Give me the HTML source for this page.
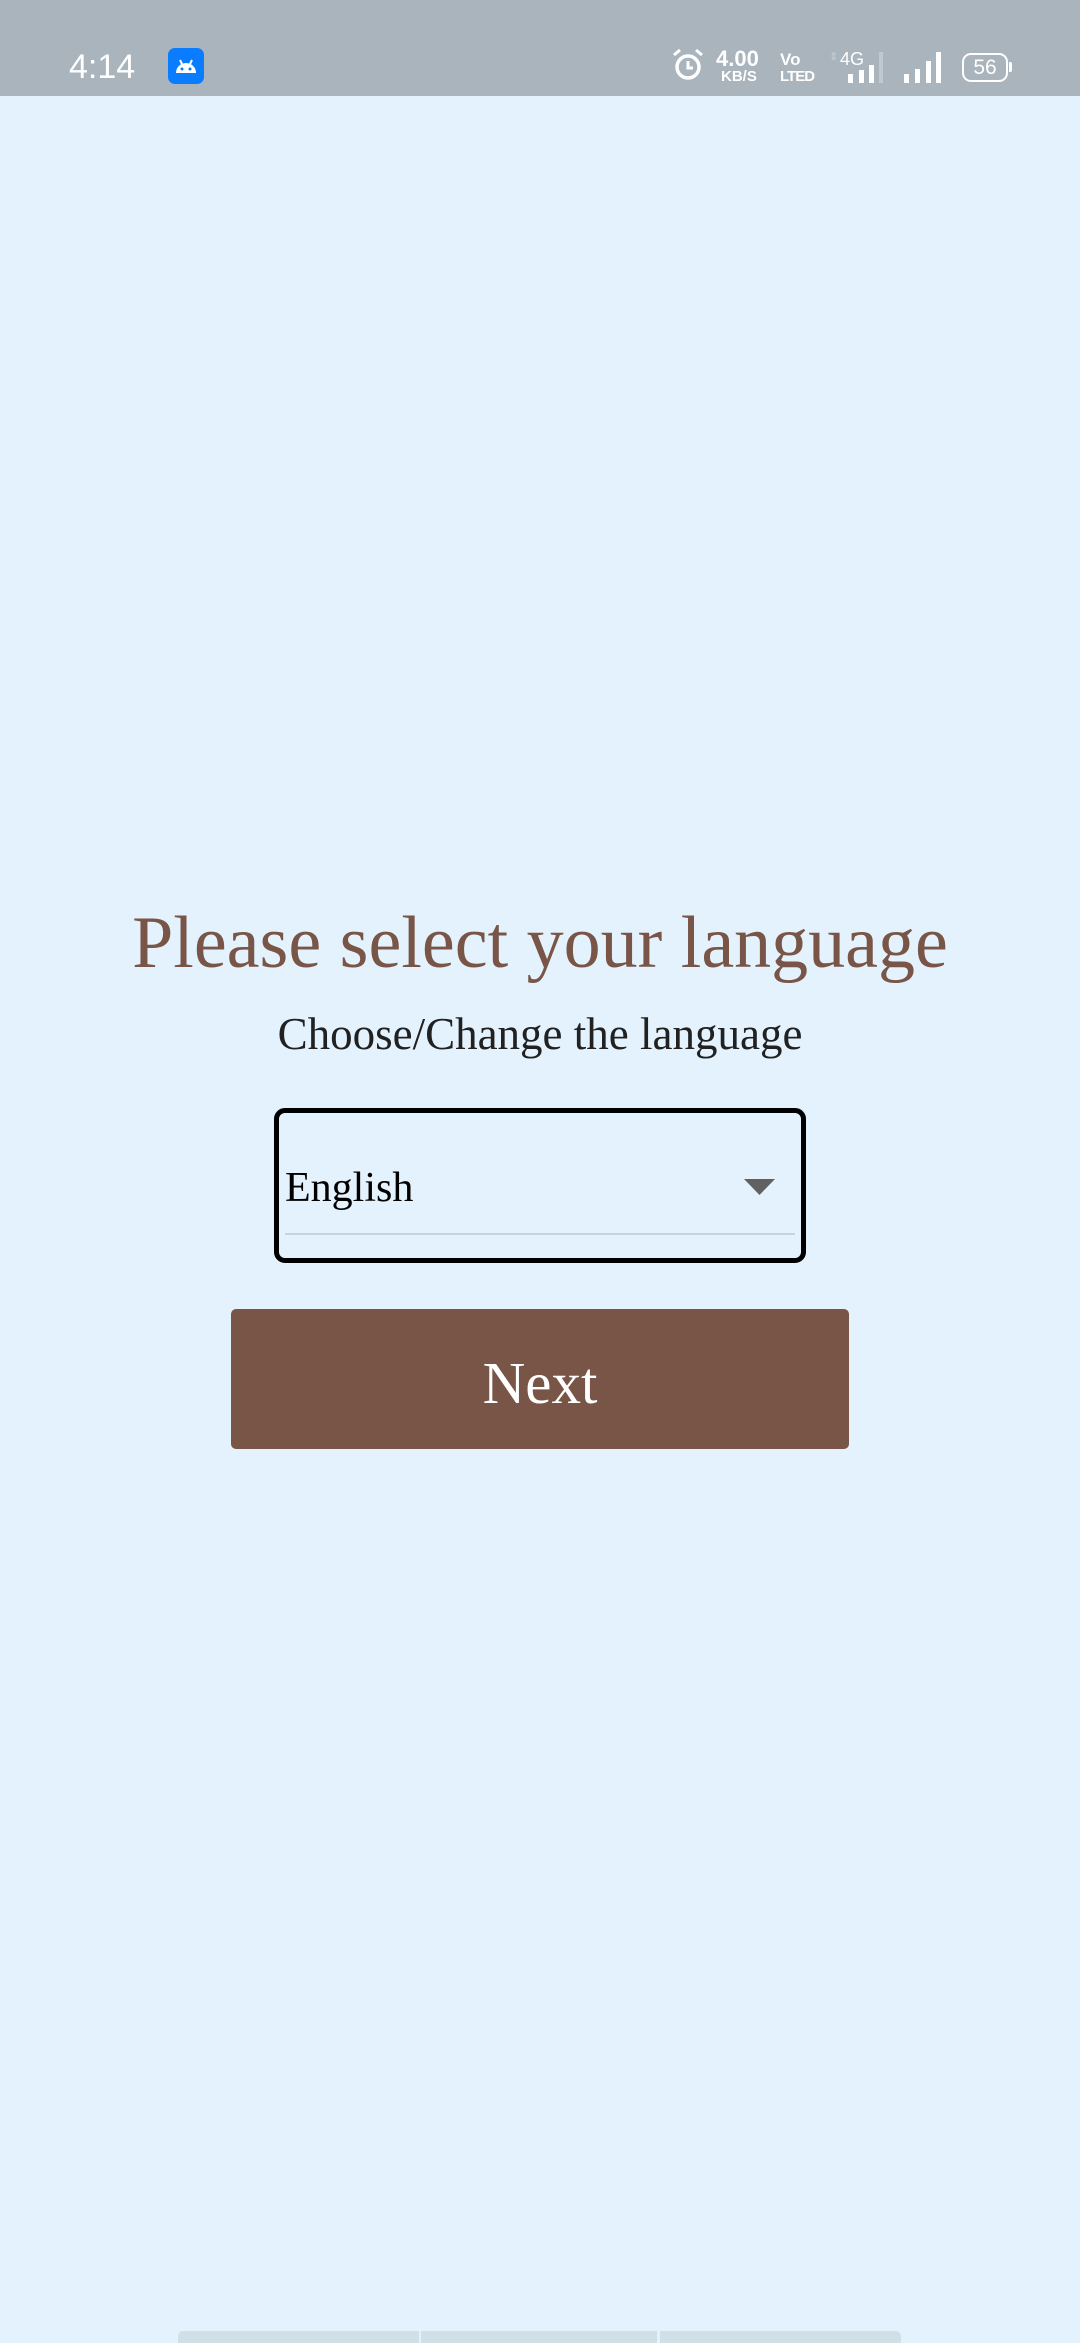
<!DOCTYPE html>
<html><head><meta charset="utf-8"><style>
html,body{margin:0;padding:0;width:1080px;height:2340px;overflow:hidden;background:#e3f2fd;font-family:"Liberation Serif",serif;}
.sb{position:absolute;left:0;top:0;width:1080px;height:96px;background:#a9b4bd;}
.abs{position:absolute;}
.t{white-space:nowrap;line-height:1;}
</style></head><body>
<div class="sb">
  <div class="abs" style="left:69px;top:50px;font:34px 'Liberation Sans',sans-serif;color:#fff;line-height:1;">4:14</div>
  <div class="abs" style="left:168px;top:48px;width:36px;height:36px;background:#0a7cff;border-radius:7px;">
    <svg width="36" height="36" viewBox="0 0 36 36"><path d="M8 25 A10 10 0 0 1 28 25 Z" fill="#fff"/><line x1="12" y1="12" x2="14" y2="16" stroke="#fff" stroke-width="2"/><line x1="24" y1="12" x2="22" y2="16" stroke="#fff" stroke-width="2"/><circle cx="14" cy="21" r="1.5" fill="#0a7cff"/><circle cx="22" cy="21" r="1.5" fill="#0a7cff"/></svg>
  </div>
  <svg class="abs" style="left:670px;top:48px" width="36" height="34" viewBox="0 0 36 34"><circle cx="18" cy="19" r="11" fill="none" stroke="#fff" stroke-width="3.5"/><path d="M18 13v7h5" fill="none" stroke="#fff" stroke-width="3"/><path d="M4 7l6-5M32 7l-6-5" stroke="#fff" stroke-width="3"/></svg>
  <div class="abs" style="left:716px;top:48px;font:bold 22px 'Liberation Sans',sans-serif;color:#fff;line-height:1;">4.00</div>
  <div class="abs" style="left:721px;top:69px;font:bold 15px 'Liberation Sans',sans-serif;color:#fff;line-height:1;">KB/S</div>
  <div class="abs" style="left:780px;top:51px;font:bold 17px 'Liberation Sans',sans-serif;color:#fff;line-height:1;">Vo</div>
  <div class="abs" style="left:780px;top:69px;font:bold 15px 'Liberation Sans',sans-serif;color:#fff;line-height:1;letter-spacing:-1px;">LTED</div>
  <div class="abs" style="left:829px;top:52px;font:11px 'Liberation Sans',sans-serif;color:#c8d0d6;line-height:1;">⇕</div>
  <div class="abs" style="left:840px;top:50px;font:18px 'Liberation Sans',sans-serif;color:#fff;line-height:1;">4G</div>
  <svg class="abs" style="left:845px;top:50px" width="100" height="35" viewBox="0 0 100 35">
    <rect x="3" y="24" width="5" height="9" fill="#fff"/><rect x="14" y="20" width="5" height="13" fill="#fff"/><rect x="24" y="15" width="5" height="18" fill="#fff"/><rect x="34" y="2" width="4" height="31" fill="#c0c9cf"/>
    <rect x="59" y="24" width="5" height="9" fill="#fff"/><rect x="70" y="19" width="5" height="14" fill="#fff"/><rect x="81" y="11" width="5" height="22" fill="#fff"/><rect x="91" y="2" width="5" height="31" fill="#fff"/>
  </svg>
  <div class="abs" style="left:962px;top:53px;width:42px;height:25px;border:2.5px solid #fff;border-radius:9px;font:21px 'Liberation Sans',sans-serif;color:#fff;text-align:center;line-height:25px;">56</div>
  <div class="abs" style="left:1009px;top:62px;width:3px;height:10px;background:#fff;border-radius:0 2px 2px 0;"></div>
</div>

<div class="abs t" style="left:0;width:1080px;text-align:center;top:906px;font-size:74px;color:#795548;">Please select your language</div>
<div class="abs t" style="left:0;width:1080px;text-align:center;top:1012px;font-size:45px;color:#212121;">Choose/Change the language</div>

<div class="abs" style="left:274px;top:1108px;width:522px;height:145px;border:5px solid #000;border-radius:11px;"></div>
<div class="abs t" style="left:285px;top:1167px;font-size:42px;color:#000;">English</div>
<svg class="abs" style="left:744px;top:1179px" width="31" height="16" viewBox="0 0 31 16"><path d="M0 0H31L15.5 16Z" fill="#616161"/></svg>
<div class="abs" style="left:285px;top:1233px;width:510px;height:2px;background:#c9d3db;"></div>

<div class="abs" style="left:231px;top:1309px;width:618px;height:140px;background:#795548;border-radius:5px;"></div>
<div class="abs t" style="left:231px;width:618px;text-align:center;top:1354px;font-size:59px;color:#fff;">Next</div>

<div class="abs" style="left:178px;top:2331px;width:241px;height:12px;background:#d1dfe7;border-radius:5px 0 0 0;"></div>
<div class="abs" style="left:421px;top:2331px;width:236px;height:12px;background:#d1dfe7;"></div>
<div class="abs" style="left:660px;top:2331px;width:241px;height:12px;background:#d1dfe7;border-radius:0 5px 0 0;"></div>
</body></html>
